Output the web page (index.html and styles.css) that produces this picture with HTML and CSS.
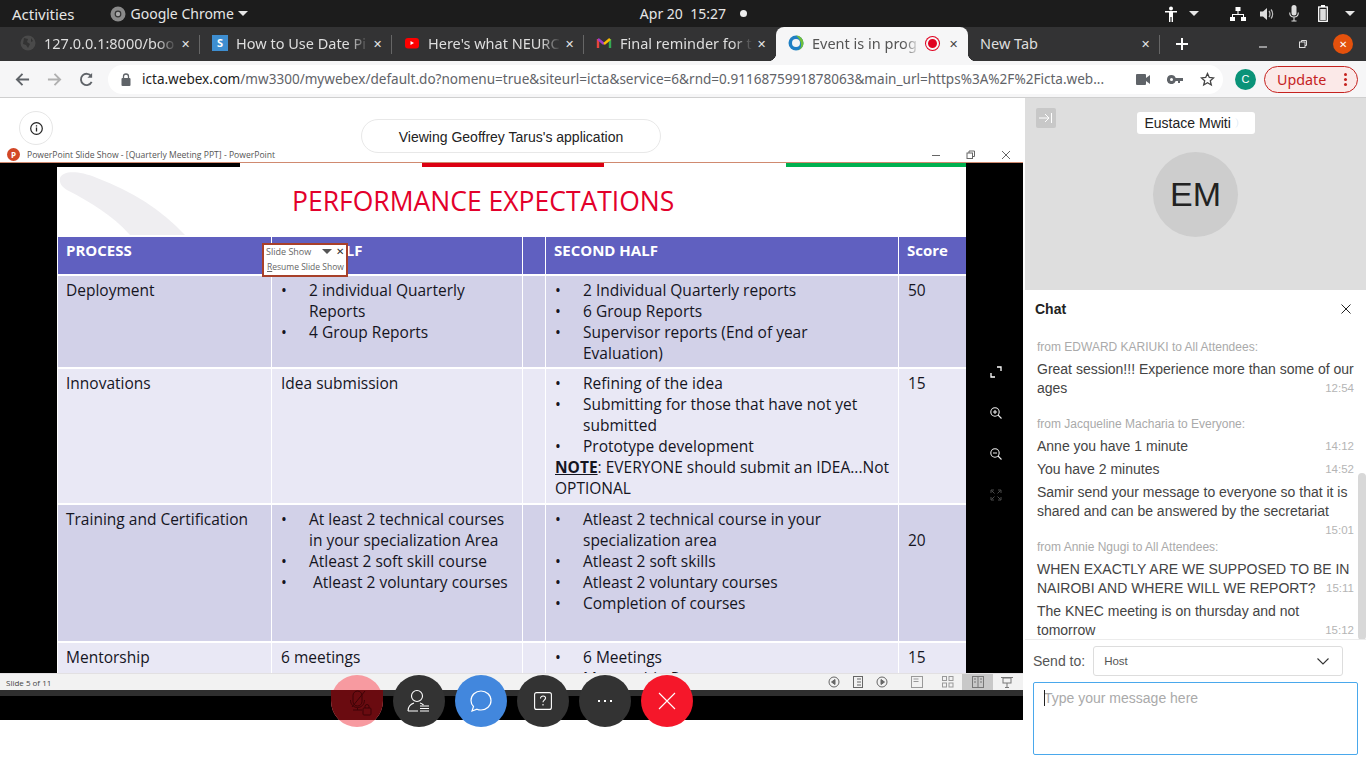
FILE: index.html
```html
<!DOCTYPE html>
<html lang="en">
<head>
    <meta charset="UTF-8">
    <title>Event is in progress</title>
    <link rel="stylesheet" href="styles.css">
</head>
<body>
    <div class="topbar">
        <span class="topbar__activities">Activities</span>
        <span class="topbar__app">
            <svg width="16" height="16" viewBox="0 0 16 16"><circle cx="8" cy="8" r="7.500" fill="#8a8a8a"/><circle cx="8" cy="8" r="3.400" fill="#333"/><circle cx="8" cy="8" r="2.200" fill="#aaa"/></svg>
            Google Chrome <i class="caret"></i>
        </span>
        <span class="topbar__clock">Apr 20&nbsp;&nbsp;15:27 <i class="dot"></i></span>
        <span class="topbar__tray">
            <svg width="14" height="16" viewBox="0 0 14 16" fill="#fff"><circle cx="7" cy="2.500" r="2"/><path d="M1 5h12v1.600H9V16H7.600v-5H6.400v5H5V6.600H1z"/></svg>
            <i class="caret tray-caret1"></i>
            <svg class="tray-net" width="16" height="14" viewBox="0 0 16 14" fill="#fff"><rect x="5.500" y="0" width="5" height="4"/><rect x="0" y="10" width="5" height="4"/><rect x="11" y="10" width="5" height="4"/><path d="M7.500 4h1v3H14v3h-1V8H3v2H2V7h5.500z"/></svg>
            <svg width="15" height="14" viewBox="0 0 15 14" fill="#ddd"><path d="M0 4.500h3L7 1v12L3 9.500H0z"/><path d="M9 4c1.300 1.500 1.300 4.500 0 6M11 2.500c2.200 2.500 2.200 6.500 0 9" fill="none" stroke="#bbb" stroke-width="1.200"/></svg>
            <svg width="10" height="17" viewBox="0 0 10 17" fill="#ddd"><rect x="2.500" y="0" width="5" height="10.500" rx="2.500"/><path d="M.7 7.500c0 6 8.600 6 8.600 0M5 12v3.500M2.500 16h5" fill="none" stroke="#ddd" stroke-width="1.100"/></svg>
            <svg class="tray-bat" width="10" height="17" viewBox="0 0 10 17"><rect x="3" y="0" width="4" height="2" fill="#fff"/><rect x=".7" y="2" width="8.600" height="14.300" fill="none" stroke="#fff" stroke-width="1.300"/><rect x="2.200" y="4" width="5.600" height="11" fill="#ddd"/></svg>
            <i class="caret tray-caret2"></i>
        </span>
    </div>

    <div class="tabstrip">
        <div class="tab tab--sep">
            <svg class="tab__icon" width="16" height="16" viewBox="0 0 16 16"><circle cx="8" cy="8" r="7.500" fill="#4a4a4a"/><path d="M4 3l4 1-1 3 3 2-2 4-2-3-3-1zM11 3l2 3-2 1z" fill="#333"/></svg>
            <span class="tab__title">127.0.0.1:8000/boo</span><span class="tab__x">&#10005;</span>
        </div>
        <div class="tab tab--sep">
            <span class="tab__icon favicon-s">S</span>
            <span class="tab__title">How to Use Date Pi</span><span class="tab__x">&#10005;</span>
        </div>
        <div class="tab tab--sep">
            <svg class="tab__icon" width="16" height="16" viewBox="0 0 16 16"><rect x="1" y="3" width="14" height="10.500" rx="3" fill="#f00"/><path d="M6.500 6v4l3.500-2z" fill="#fff"/></svg>
            <span class="tab__title">Here's what NEURC</span><span class="tab__x">&#10005;</span>
        </div>
        <div class="tab">
            <svg class="tab__icon" width="16" height="16" viewBox="0 0 16 16" fill="none" stroke-width="2.400"><path d="M2 13V4" stroke="#e8453c"/><path d="M14 13V4" stroke="#34a853"/><path d="M2 4l6 5" stroke="#a03bc7"/><path d="M8 9l6-5" stroke="#fbbc04"/></svg>
            <span class="tab__title">Final reminder for t</span><span class="tab__x">&#10005;</span>
        </div>
        <div class="tab tab--active">
            <svg class="tab__icon" width="16" height="16" viewBox="0 0 16 16"><circle cx="8" cy="8" r="7.500" fill="#1f7fc4"/><path d="M8 .5a7.500 7.500 0 0 1 7.500 7.500c0 4-3 7.500-7.500 7.500 4 0 5-3 5-6S11 3 8 .5z" fill="#6fbf3a"/><circle cx="8" cy="8" r="4" fill="#f4f4f4"/></svg>
            <span class="tab__title">Event is in prog</span>
            <span class="rec"></span>
            <span class="tab__x">&#10005;</span>
        </div>
        <div class="tab tab--newtab tab--sep">
            <span class="tab__title">New Tab</span><span class="tab__x">&#10005;</span>
        </div>
        <span class="tab-plus">
            <svg width="14" height="14" viewBox="0 0 14 14"><path d="M7 1v12M1 7h12" stroke="#fff" stroke-width="2"/></svg>
        </span>
        <span class="winctl">
            <svg width="10" height="10" viewBox="0 0 10 10"><path d="M1 8h8" stroke="#ddd" stroke-width="1.200"/></svg>
            <svg width="10" height="10" viewBox="0 0 10 10" fill="none" stroke="#ddd"><rect x="1.500" y="3" width="5.500" height="5.500"/><path d="M3.500 3V1.500h5v5H7"/></svg>
            <span class="winctl__close">&#10005;</span>
        </span>
    </div>

    <div class="toolbar">
        <svg class="nav" width="15" height="15" viewBox="0 0 16 16" fill="none" stroke="#5f6368" stroke-width="2"><path d="M15 8H2M8 2L2 8l6 6"/></svg>
        <svg class="nav" width="15" height="15" viewBox="0 0 16 16" fill="none" stroke="#b0b0b0" stroke-width="2"><path d="M1 8h13M8 2l6 6-6 6"/></svg>
        <svg class="nav" width="15" height="15" viewBox="0 0 16 16" fill="none" stroke="#5f6368" stroke-width="2"><path d="M13.500 10.500A6 6 0 1 1 13 4.500"/><path d="M14 1v5H9z" fill="#5f6368" stroke="none"/></svg>
        <div class="omnibox">
            <svg width="10" height="13" viewBox="0 0 10 13"><rect x="0.500" y="5" width="9" height="8" rx="1" fill="#5f6368"/><path d="M2.500 5V3.500a2.500 2.500 0 0 1 5 0V5" fill="none" stroke="#5f6368" stroke-width="1.300"/></svg>
            <span class="omnibox__url"><b>icta.webex.com</b>/mw3300/mywebex/default.do?nomenu=true&amp;siteurl=icta&amp;service=6&amp;rnd=0.9116875991878063&amp;main_url=https%3A%2F%2Ficta.web...</span>
            <svg class="omni-cam" width="14" height="11" viewBox="0 0 14 11" fill="#5f6368"><rect x="0" y="0" width="10" height="11" rx="1"/><path d="M10 4l4-3v9l-4-3z"/></svg>
            <svg class="omni-key" width="16" height="9" viewBox="0 0 16 9" fill="#5f6368"><path d="M4.500 0A4.500 4.500 0 1 0 8.700 6H11v2h2V6h3V3H8.700A4.500 4.500 0 0 0 4.500 0zm0 3a1.500 1.500 0 1 1 0 3 1.500 1.500 0 0 1 0-3z"/></svg>
            <svg class="omni-star" width="15" height="15" viewBox="0 0 15 15" fill="none" stroke="#444" stroke-width="1.300"><path d="M7.500 1.500l1.800 4 4.300.4-3.300 2.900 1 4.200-3.800-2.200L3.700 13l1-4.200L1.400 5.900l4.300-.4z"/></svg>
        </div>
        <span class="avatar">C</span>
        <span class="update">Update <i class="update__dots"></i></span>
    </div>

    <div class="main">
        <div class="stage">
            <div class="stage__head">
                <span class="info-btn">
                    <svg width="13" height="13" viewBox="0 0 13 13" fill="none" stroke="#222"><circle cx="6.500" cy="6.500" r="5.800" stroke-width="1.200"/><path d="M6.500 5.500v4M6.500 3.300v1.200" stroke-width="1.300"/></svg>
                </span>
            </div>
            <div class="ppt-title">
                <span class="ppt-logo">P</span>
                <span class="ppt-title__text">PowerPoint Slide Show - [Quarterly Meeting PPT] - PowerPoint</span>
                <span class="ppt-title__ctl">
                    <svg width="10" height="10" viewBox="0 0 10 10"><path d="M1 5.500h8" stroke="#666"/></svg>
                    <svg width="10" height="10" viewBox="0 0 10 10" fill="none" stroke="#666"><rect x="1" y="3" width="5.500" height="5.500"/><path d="M3 3V1h5.500v5.500H6.500"/></svg>
                    <svg width="10" height="10" viewBox="0 0 10 10" fill="none" stroke="#666"><path d="M1 1l8 8M9 1l-8 8"/></svg>
                </span>
            </div>
            <div class="show">
                <div class="slide">
                    <div class="slide__bars">
                        <i class="bar bar--black"></i><i class="bar bar--white"></i><i class="bar bar--red"></i><i class="bar bar--white2"></i><i class="bar bar--green"></i>
                    </div>
                    <svg class="swoosh" width="130" height="65" viewBox="0 0 130 65"><path d="M3 8C6 1 20 0 40 8c35 13 65 32 88 57H73C55 45 35 33 10 20 5 17 2 13 3 8z" fill="#efeef1"/></svg>
                    <h1 class="slide__title">PERFORMANCE EXPECTATIONS</h1>
                    <table class="grid">
                        <colgroup><col class="c1"><col class="c2"><col class="c3"><col class="c4"><col class="c5"></colgroup>
                        <tr class="row-head">
                            <th>PROCESS</th><th>FIRST HALF</th><th></th><th>SECOND HALF</th><th>Score</th>
                        </tr>
                        <tr class="row-a">
                            <td>Deployment</td>
                            <td><ul><li>2 individual Quarterly Reports</li><li>4 Group Reports</li></ul></td>
                            <td></td>
                            <td><ul><li>2 Individual Quarterly reports</li><li>6 Group Reports</li><li>Supervisor reports (End of year<br>Evaluation)</li></ul></td>
                            <td>50</td>
                        </tr>
                        <tr class="row-b">
                            <td>Innovations</td>
                            <td>Idea submission</td>
                            <td></td>
                            <td><ul><li>Refining of the idea</li><li>Submitting for those that have not yet submitted</li><li>Prototype development</li></ul><span class="note"><b>NOTE</b>: EVERYONE should submit an IDEA...Not<br>OPTIONAL</span></td>
                            <td>15</td>
                        </tr>
                        <tr class="row-c">
                            <td>Training and Certification</td>
                            <td><ul><li>At least 2 technical courses in your specialization Area</li><li>Atleast 2 soft skill course</li><li>&nbsp;Atleast 2 voluntary courses</li></ul></td>
                            <td></td>
                            <td><ul><li>Atleast 2 technical course in your specialization area</li><li>Atleast 2 soft skills</li><li>Atleast 2 voluntary courses</li><li>Completion of courses</li></ul></td>
                            <td class="score-low">20</td>
                        </tr>
                        <tr class="row-d">
                            <td>Mentorship</td>
                            <td>6 meetings</td>
                            <td></td>
                            <td><ul><li>6 Meetings</li><li>Mentorship Reports</li></ul></td>
                            <td>15</td>
                        </tr>
                    </table>
                </div>
                <div class="resume">
                    <div class="resume__top"><span>Slide Show</span><i class="resume__caret"></i><span class="resume__x">&#10005;</span></div>
                    <div class="resume__link"><u>R</u>esume Slide Show</div>
                </div>
                <div class="side-tools">
                    <svg width="12" height="12" viewBox="0 0 12 12" fill="none" stroke="#fff" stroke-width="1.300"><path d="M7 1h4v4M1 7v4h4"/></svg>
                    <svg width="12" height="12" viewBox="0 0 12 12" fill="none" stroke="#eee" stroke-width="1.100"><circle cx="5" cy="5" r="4.200"/><path d="M8 8l3.500 3.500M3 5h4M5 3v4"/></svg>
                    <svg width="12" height="12" viewBox="0 0 12 12" fill="none" stroke="#eee" stroke-width="1.100"><circle cx="5" cy="5" r="4.200"/><path d="M8 8l3.500 3.500M3 5h4"/></svg>
                    <svg width="12" height="12" viewBox="0 0 12 12" fill="none" stroke="#4a4a4a"><path d="M1 4V1h3M8 1h3v3M1 8v3h3M8 11h3V8M1.500 1.500l3 3M10.500 1.500l-3 3M1.500 10.500l3-3M10.500 10.500l-3-3"/></svg>
                </div>
            </div>
            <div class="statusbar">
                <span class="statusbar__text">Slide 5 of 11</span>
                <span class="statusbar__icons">
                    <svg width="12" height="12" viewBox="0 0 12 12" fill="none" stroke="#666"><circle cx="6" cy="6" r="5"/><path d="M7 3.500v5L3.500 6z" fill="#666"/></svg>
                    <svg width="10" height="12" viewBox="0 0 10 12" fill="none" stroke="#666"><rect x=".5" y=".5" width="9" height="11"/><path d="M4 3h4M4 6h4M4 9h4"/></svg>
                    <svg width="12" height="12" viewBox="0 0 12 12" fill="none" stroke="#666"><circle cx="6" cy="6" r="5"/><path d="M5 3.500v5L8.500 6z" fill="#666"/></svg>
                    <svg class="st-notes" width="12" height="12" viewBox="0 0 12 12" fill="none" stroke="#999"><rect x=".5" y=".5" width="11" height="11"/><path d="M2.500 3h5M2.500 5.500h5"/></svg>
                    <svg class="st-sorter" width="12" height="12" viewBox="0 0 12 12" fill="none" stroke="#999"><rect x=".5" y=".5" width="4" height="4"/><rect x="7" y=".5" width="4" height="4"/><rect x=".5" y="7" width="4" height="4"/><rect x="7" y="7" width="4" height="4"/></svg>
                    <span class="st-on"><svg width="12" height="12" viewBox="0 0 12 12" fill="none" stroke="#777"><rect x=".5" y=".5" width="11" height="11"/><path d="M6 .5v11M2 3h2M2 6h2M8 3h2M8 6h2"/></svg></span>
                    <svg class="st-pres" width="12" height="12" viewBox="0 0 12 12" fill="none" stroke="#777"><path d="M0 1.500h12"/><rect x="2" y="2" width="8" height="5"/><path d="M6 7v4M4 11.500h4"/></svg>
                </span>
            </div>
            <div class="stage__foot"></div>
            <div class="stage__blank"></div>

            <span class="viewing">Viewing Geoffrey Tarus's application</span>

            <div class="controls">
                <span class="ctl ctl--mute">
                    <svg width="30" height="36" viewBox="0 0 30 36" fill="none" stroke="#3d0306" stroke-width="1"><rect x="11" y="8" width="9" height="15" rx="4.500"/><path d="M8.500 17c0 10 14 10 14 0M15.500 25v2M11 27h9M10 24L23 8"/><rect x="21" y="25" width="8" height="7" rx="1"/><path d="M23 25v-1.500a2 2 0 0 1 4 0V25"/></svg>
                </span>
                <span class="ctl ctl--dark">
                    <svg width="24" height="24" viewBox="0 0 24 24" fill="none" stroke="#fff" stroke-width="1.100"><circle cx="10" cy="7" r="5.500"/><path d="M1 22c0-5 3-7 6-8M13 14c1.500.5 2.500 1 3.500 2M1 22h10"/><path d="M13 17h9M13 19.500h9M13 22h9" stroke-width="1.200"/></svg>
                </span>
                <span class="ctl ctl--blue">
                    <svg width="22" height="22" viewBox="0 0 22 22" fill="none" stroke="#fff" stroke-width="1.200"><path d="M11 1c5.500 0 10 4.200 10 9.500S16.500 20 11 20c-1.500 0-3-.3-4-.8L2 21l1.500-4.500C2 15 1 13 1 10.500 1 5.200 5.500 1 11 1z"/></svg>
                </span>
                <span class="ctl ctl--dark">
                    <svg width="18" height="18" viewBox="0 0 18 18" fill="none" stroke="#fff" stroke-width="1.100"><rect x=".6" y=".6" width="16.800" height="16.800" rx="2"/><path d="M6.500 6.500c0-3.500 5.500-3 5-.1-.3 1.700-2.500 1.800-2.500 3.800M9 12v1.500"/></svg>
                </span>
                <span class="ctl ctl--dark">
                    <svg width="14" height="2" viewBox="0 0 14 2" fill="#fff"><rect width="2" height="2"/><rect x="6" width="2" height="2"/><rect x="12" width="2" height="2"/></svg>
                </span>
                <span class="ctl ctl--end">
                    <svg width="18" height="18" viewBox="0 0 18 18" stroke="#fff" stroke-width="1.100"><path d="M1 1l16 16M17 1L1 17"/></svg>
                </span>
            </div>
        </div>

        <div class="panel">
            <div class="video">
                <span class="collapse">
                    <svg width="14" height="10" viewBox="0 0 14 10" fill="none" stroke="#fff"><path d="M0 5h10M6 1l4 4-4 4M12.500 0v10"/></svg>
                </span>
                <span class="video__name">Eustace Mwiti
                    <svg width="4" height="10" viewBox="0 0 4 10" fill="none" stroke="#e3edf8"><path d="M1 .5c2.500 2.500 2.500 6.500 0 9"/></svg>
                </span>
                <span class="video__avatar">EM</span>
            </div>
            <div class="chat">
                <div class="chat__head">
                    <b>Chat</b>
                    <svg width="10" height="10" viewBox="0 0 10 10" stroke="#222"><path d="M.5.5l9 9M9.500.5l-9 9"/></svg>
                </div>
                <div class="chat__log">
                    <p class="from">from EDWARD KARIUKI to All Attendees:</p>
                    <div class="msg"><span class="msg__full">Great session!!! Experience more than some of our</span><span>ages</span><time>12:54</time></div>
                    <p class="from from--gap">from Jacqueline Macharia to Everyone:</p>
                    <div class="msg"><span>Anne you have 1 minute</span><time>14:12</time></div>
                    <div class="msg"><span>You have 2 minutes</span><time>14:52</time></div>
                    <div class="msg msg--tail"><span class="msg__full">Samir send your message to everyone so that it is</span><span class="msg__full">shared and can be answered by the secretariat</span><time>15:01</time></div>
                    <p class="from">from Annie Ngugi to All Attendees:</p>
                    <div class="msg"><span class="msg__full">WHEN EXACTLY ARE WE SUPPOSED TO BE IN</span><span>NAIROBI AND WHERE WILL WE REPORT?</span><time>15:11</time></div>
                    <div class="msg"><span class="msg__full">The KNEC meeting is on thursday and not</span><span>tomorrow</span><time>15:12</time></div>
                    <span class="chat__scroll"></span>
                </div>
                <div class="chat__send">
                    <span class="send-label">Send to:</span>
                    <span class="send-select">Host
                        <svg width="12" height="7" viewBox="0 0 12 7" fill="none" stroke="#333" stroke-width="1.100"><path d="M.5.5L6 6 11.500.5"/></svg>
                    </span>
                </div>
                <div class="chat__input"><i class="cursor"></i>Type your message here</div>
            </div>
        </div>
    </div>
</body>
</html>
```

FILE: styles.css
```css
* {
    box-sizing: border-box;
}

html, body {
    margin: 0;
    height: 768px;
    overflow: hidden;
}

body {
    width: 1366px;
    background: white;
    font-family: "Liberation Sans", Arial, sans-serif;
}

/* ubuntu top bar */
.topbar {
    height: 27px;
    background: #1c1c1c;
    color: #e6e6e6;
    font-family: "Noto Sans", sans-serif;
    font-size: 14px;
    display: flex;
    align-items: center;
}

.topbar__activities {
    margin-left: 12px;
    font-size: 15px;
}

.topbar__app {
    margin-left: 35px;
    display: flex;
    align-items: center;
    gap: 5px;
}

.topbar__clock {
    margin-left: 392px;
    display: flex;
    align-items: center;
}

.caret {
    display: inline-block;
    border-left: 5px solid transparent;
    border-right: 5px solid transparent;
    border-top: 5px solid #e6e6e6;
}

.topbar__app .caret {
    margin-left: -1px;
}

.dot {
    width: 7px;
    height: 7px;
    border-radius: 50%;
    background: #eee;
    margin-left: 14px;
}

.topbar__tray {
    margin-left: auto;
    margin-right: 11px;
    display: flex;
    align-items: center;
    gap: 14px;
}

.tray-caret1 {
    margin-left: -3px;
}

.tray-net {
    margin-left: 17px;
}

.tray-bat {
    margin-left: 5px;
}

.tray-caret2 {
    margin-left: 3px;
}

/* chrome tabs */
.tabstrip {
    height: 34px;
    background: #333334;
    color: #dedede;
    font-family: "Noto Sans", sans-serif;
    font-size: 14.500px;
    display: flex;
    align-items: center;
    padding-left: 8px;
}

.tab {
    width: 192px;
    height: 34px;
    flex: none;
    display: flex;
    align-items: center;
    padding: 0 10px 2px 12px;
    position: relative;
}

.tab--sep::after {
    content: "";
    position: absolute;
    right: 0;
    top: 8px;
    height: 19px;
    border-right: 1px solid #666;
}

.tab__icon {
    flex: none;
    width: 16px;
    height: 16px;
    margin-right: 8px;
}

.favicon-s {
    background: #3e8ed0;
    color: white;
    font-size: 11px;
    font-weight: bold;
    text-align: center;
    line-height: 16px;
}

.tab__title {
    flex: 1;
    overflow: hidden;
    white-space: nowrap;
    -webkit-mask-image: linear-gradient(to right, black 85%, transparent);
    mask-image: linear-gradient(to right, black 85%, transparent);
}

.tab__x {
    flex: none;
    font-size: 11px;
    margin-left: 4px;
    color: #e4e4e4;
}

.tab--active {
    background: #f6f6f7;
    color: #555;
    border-radius: 8px 8px 0 0;
}

/* the little curves at the foot of the active tab */
.tab--active::before, .tab--active::after {
    content: "";
    position: absolute;
    bottom: 0;
    width: 8px;
    height: 8px;
}

.tab--active::before {
    left: -8px;
    background: radial-gradient(circle at 0 0, transparent 8px, #f6f6f7 8.500px);
}

.tab--active::after {
    right: -8px;
    background: radial-gradient(circle at 100% 0, transparent 8px, #f6f6f7 8.500px);
}

.rec {
    width: 13px;
    height: 13px;
    flex: none;
    border-radius: 50%;
    background: #e00020;
    border: 2px solid #f6f6f7;
    box-shadow: 0 0 0 1px #e00020;
    margin-left: 6px;
}

.tab--active .tab__x {
    color: #444;
    margin-left: 10px;
}

.tab--newtab .tab__title {
    -webkit-mask-image: none;
    mask-image: none;
}

.tab-plus {
    margin-left: 15px;
    display: flex;
}

.winctl {
    margin-left: auto;
    display: flex;
    align-items: center;
    gap: 30px;
    padding-right: 13px;
}

.winctl__close {
    width: 20px;
    height: 20px;
    margin-left: -5px;
    border-radius: 50%;
    background: #e4510c;
    color: white;
    font-size: 10px;
    line-height: 20px;
    text-align: center;
}

/* chrome toolbar */
.toolbar {
    height: 37px;
    background: #f6f6f7;
    border-bottom: 1px solid #cfcfcf;
    display: flex;
    align-items: center;
    padding-left: 15px;
}

.nav {
    margin-right: 17px;
}

.omnibox {
    width: 1115px;
    height: 29px;
    margin-left: -3px;
    background: white;
    border-radius: 15px;
    display: flex;
    align-items: center;
    padding-left: 13px;
    font-family: "Noto Sans", sans-serif;
    font-size: 13.550px;
    color: #5f6368;
}

.omnibox__url {
    margin-left: 11px;
    width: 975px;
    white-space: nowrap;
    overflow: hidden;
}

.omnibox__url b {
    color: #1c1c1c;
    font-weight: normal;
}

.omni-cam {
    margin-left: 19px;
}

.omni-key {
    margin-left: 17px;
}

.omni-star {
    margin-left: 17px;
}

.avatar {
    width: 21px;
    height: 21px;
    margin-left: 12px;
    border-radius: 50%;
    background: #0a9378;
    color: white;
    font-size: 11px;
    line-height: 21px;
    text-align: center;
}

.update {
    width: 94px;
    height: 27px;
    margin-left: 8px;
    border: 1px solid #c5221f;
    border-radius: 14px;
    background: #fbe9e8;
    color: #c5221f;
    font-family: "Noto Sans", sans-serif;
    font-size: 14.300px;
    line-height: 25px;
    padding-left: 12px;
    position: relative;
}

.update__dots {
    position: absolute;
    right: 10px;
    top: 6px;
    width: 3px;
    height: 3px;
    border-radius: 50%;
    background: #c5221f;
    box-shadow: 0 5px 0 #c5221f, 0 10px 0 #c5221f;
}

/* main area */
.main {
    display: flex;
    height: 670px;
}

.stage {
    width: 1025px;
    flex: none;
    padding-right: 2px;
    position: relative;
    display: flex;
    flex-direction: column;
}

.stage__head {
    height: 49px;
    background: white;
    display: flex;
    align-items: center;
    padding-left: 19px;
}

.info-btn {
    width: 34px;
    height: 34px;
    margin-top: 11px;
    border: 1px solid #e6e6e6;
    border-radius: 50%;
    display: flex;
    align-items: center;
    justify-content: center;
}

.viewing {
    position: absolute;
    left: 361px;
    top: 21px;
    width: 300px;
    height: 34px;
    background: white;
    border: 1px solid #e8e8e8;
    border-radius: 17px;
    font-size: 14px;
    line-height: 34px;
    text-align: center;
    color: #222;
}

.ppt-title {
    height: 16px;
    background: white;
    border-bottom: 1px solid #d08a70;
    display: flex;
    align-items: center;
    padding-left: 7px;
    font-family: "Open Sans", sans-serif;
    font-size: 8.600px;
    color: #555;
}

.ppt-logo {
    width: 13px;
    height: 13px;
    border-radius: 50%;
    background: #d24726;
    color: white;
    font-size: 8px;
    font-weight: bold;
    line-height: 13px;
    text-align: center;
    margin-right: 7px;
}

.ppt-title__ctl {
    margin-left: auto;
    display: flex;
    gap: 25px;
    padding-right: 12px;
}

.show {
    height: 510px;
    background: black;
    position: relative;
    overflow: hidden;
    padding-left: 57px;
}

.slide {
    width: 909px;
    height: 510px;
    background: white;
    position: relative;
    overflow: hidden;
}

.slide__bars {
    display: flex;
    height: 4px;
}

.bar {
    display: block;
    height: 4px;
}

.bar--black {
    width: 183px;
    background: black;
}

.bar--white {
    width: 182px;
}

.bar--red {
    width: 182px;
    background: #dc0012;
}

.bar--white2 {
    width: 182px;
}

.bar--green {
    width: 180px;
    background: #00b050;
}

.swoosh {
    position: absolute;
    left: 0;
    top: 7px;
}

.slide__title {
    margin: 0;
    height: 68px;
    padding-top: 16px;
    padding-left: 235px;
    font-family: "Open Sans", sans-serif;
    font-weight: normal;
    font-size: 26.500px;
    line-height: 36px;
    color: #e3002b;
    position: relative;
}

.grid {
    border-collapse: collapse;
    table-layout: fixed;
    width: 909px;
    font-family: "Open Sans", sans-serif;
    font-size: 15.500px;
    line-height: 21px;
    color: #15151f;
}

.c1 { width: 214px; }
.c2 { width: 251px; }
.c3 { width: 23px; }
.c4 { width: 353px; }
.c5 { width: 68px; }

.grid th, .grid td {
    border: 2px solid white;
    border-left-width: 1.500px;
    border-right-width: 1.500px;
    padding: 4px 4px 2px 9px;
    vertical-align: top;
    text-align: left;
}

.grid th {
    background: #6060c0;
    color: white;
    font-size: 15px;
    padding: 3px 4px 5px 8px;
    font-weight: bold;
}

.grid td:first-child {
    padding-left: 8px;
}

.row-head { height: 39px; }
.row-a { height: 93px; }
.row-b { height: 136px; }
.row-c { height: 138px; }

.row-a td, .row-c td {
    background: #d2d1e8;
}

.row-b td, .row-d td {
    background: #e9e8f5;
}

.grid ul {
    margin: 0;
    padding-left: 28px;
    list-style: none;
}

.grid li {
    position: relative;
}

.grid li::before {
    content: "\2022";
    position: absolute;
    left: -28px;
}

.note b {
    text-decoration: underline;
}

.score-low {
    padding-top: 25px !important;
}

/* slide show popup */
.resume {
    position: absolute;
    left: 262px;
    top: 80px;
    width: 86px;
    height: 34px;
    background: white;
    border: 2px solid #a8402a;
    font-family: "Open Sans", sans-serif;
    font-size: 9px;
    color: #666;
    padding: 0 2px;
}

.resume__top {
    display: flex;
    align-items: center;
    height: 13px;
}

.resume__caret {
    margin-left: auto;
    margin-right: 4px;
    border-left: 5px solid transparent;
    border-right: 5px solid transparent;
    border-top: 5px solid #555;
}

.resume__x {
    color: #333;
    font-size: 9.500px;
}

.resume__link {
    margin-top: 3px;
    padding-left: 1px;
    font-size: 8.500px;
    white-space: nowrap;
}

.side-tools {
    position: absolute;
    left: 990px;
    top: 203px;
    display: flex;
    flex-direction: column;
    gap: 29px;
}

.statusbar {
    height: 17px;
    background: #f2f2f2;
    border-top: 1px solid #e2e0e2;
    display: flex;
    align-items: center;
    padding-left: 6px;
    font-family: "Open Sans", sans-serif;
    font-size: 8px;
    color: #444;
}

.statusbar__icons {
    margin-left: auto;
    margin-right: 10px;
    display: flex;
    align-items: center;
    gap: 13px;
}

.st-notes {
    margin-left: 10px;
}

.st-sorter {
    margin-left: 6px;
}

.st-on {
    width: 31px;
    height: 16px;
    margin-left: -5px;
    background: #c8c8c8;
    display: flex;
    align-items: center;
    justify-content: center;
}

.st-pres {
    margin-left: -5px;
}

.stage__foot {
    height: 30px;
    background: black;
    border-top: 6px solid #2f2f2f;
}

.stage__blank {
    flex: 1;
    background: white;
}

/* meeting controls */
.controls {
    position: absolute;
    left: 331px;
    top: 577px;
    display: flex;
    gap: 10px;
}

.ctl {
    width: 52px;
    height: 52px;
    border-radius: 50%;
    display: flex;
    align-items: center;
    justify-content: center;
}

.ctl--mute {
    background: #f79aa0;
    position: relative;
}

.ctl--mute::after {
    content: "";
    position: absolute;
    left: 0;
    right: 0;
    top: 15px;
    bottom: 0;
    border-radius: 0 0 26px 26px;
    background: #6a0b10;
    clip-path: inset(0 0 7px 0);
}

.ctl--mute svg {
    position: relative;
    z-index: 1;
}

.ctl--dark {
    background: #333;
}

.ctl--blue {
    background: #4287dd;
}

.ctl--end {
    background: #f5172a;
}

/* right panel */
.panel {
    width: 341px;
    flex: none;
    display: flex;
    flex-direction: column;
}

.video {
    height: 192px;
    background: #dedede;
    position: relative;
    display: flex;
    flex-direction: column;
    align-items: center;
    padding-top: 14px;
}

.collapse {
    position: absolute;
    left: 11px;
    top: 10px;
    width: 20px;
    height: 20px;
    background: #c8c8c8;
    border-radius: 2px;
    display: flex;
    align-items: center;
    justify-content: center;
}

.video__name {
    width: 118px;
    height: 22px;
    background: white;
    border-radius: 3px;
    font-size: 14px;
    line-height: 22px;
    padding-left: 8px;
    color: #222;
}

.video__avatar {
    width: 85px;
    height: 85px;
    margin-top: 18px;
    border-radius: 50%;
    background: #cdcdcd;
    color: #222;
    font-size: 34px;
    line-height: 85px;
    text-align: center;
}

.chat {
    flex: 1;
    display: flex;
    flex-direction: column;
    background: white;
    color: #444;
}

.chat__head {
    height: 38px;
    flex: none;
    display: flex;
    align-items: center;
    justify-content: space-between;
    padding: 0 15px 0 10px;
    font-size: 14px;
    color: #222;
}

.chat__log {
    height: 312px;
    flex: none;
    padding: 12px 12px 0 12px;
    border-bottom: 1px solid #ececec;
    position: relative;
    overflow: hidden;
}

.from {
    margin: 0 0 6px;
    font-size: 12px;
    line-height: 14px;
    color: #aaa;
}

.from--gap {
    margin-top: 19px;
}

.msg {
    display: flex;
    flex-wrap: wrap;
    align-items: flex-end;
    justify-content: space-between;
    font-size: 14px;
    line-height: 19px;
    margin-bottom: 4px;
}

.msg__full {
    flex: 0 0 100%;
}

.msg--tail {
    justify-content: flex-end;
    margin-bottom: 0;
}

.msg time {
    flex: none;
    font-size: 11.500px;
    color: #b5b5b5;
}

.chat__scroll {
    position: absolute;
    right: 0;
    top: 145px;
    width: 8px;
    height: 167px;
    background: #d8d8d8;
    border-radius: 4px;
}

.chat__send {
    height: 42px;
    flex: none;
    display: flex;
    align-items: center;
    padding-left: 8px;
}

.send-label {
    font-size: 14px;
    color: #555;
    margin-right: 8px;
}

.send-select {
    width: 250px;
    height: 30px;
    border: 1px solid #ddd;
    border-radius: 3px;
    padding: 0 13px 0 10px;
    font-size: 11.500px;
    color: #555;
    display: flex;
    align-items: center;
    justify-content: space-between;
}

.chat__input {
    width: 325px;
    height: 73px;
    margin-left: 8px;
    border: 1px solid #4aa8ec;
    border-radius: 2px;
    padding: 6px 10px;
    font-size: 14px;
    line-height: 18px;
    color: #aaa;
    position: relative;
}

.cursor {
    position: absolute;
    left: 10px;
    top: 7px;
    height: 16px;
    border-left: 1px solid #222;
}
```
